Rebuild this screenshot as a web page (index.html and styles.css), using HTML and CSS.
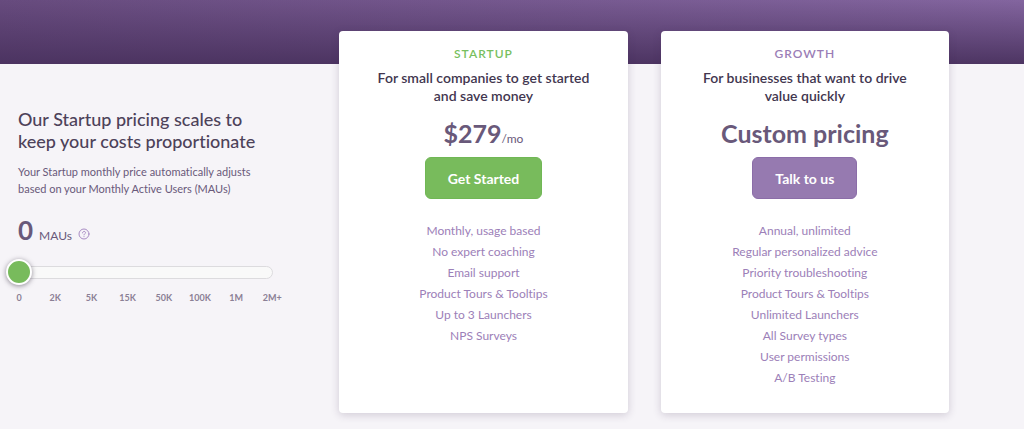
FILE: index.html
```
<!DOCTYPE html>
<html lang="en">
<head>
    <meta charset="utf-8">
    <title>Pricing</title>
    <link rel="stylesheet" href="styles.css">
</head>
<body>
    <header class="banner"></header>

    <main class="pricing">
        <section class="scale">
            <h1>Our Startup pricing scales to keep your costs proportionate</h1>
            <p class="intro">Your Startup monthly price automatically adjusts based on your Monthly Active Users (MAUs)</p>
            <div class="count">
                <output class="number" for="maus">0</output>
                <label for="maus">MAUs</label>
                <button class="help" type="button" aria-label="What are MAUs?">
                    <svg width="12" height="12" viewBox="0 0 12 12" fill="none" stroke="currentColor" stroke-linecap="round">
                        <circle cx="6" cy="6" r="5"/>
                        <path d="M4.5 4.9c0-2 3-2 3-.2 0 1.1-1.5 1-1.5 2.2"/>
                        <path d="M6 8.6v.1"/>
                    </svg>
                </button>
            </div>
            <input class="slider" id="maus" type="range" min="0" max="7" value="0">
            <div class="ticks">
                <span>0</span>
                <span>2K</span>
                <span>5K</span>
                <span>15K</span>
                <span>50K</span>
                <span>100K</span>
                <span>1M</span>
                <span>2M+</span>
            </div>
        </section>

        <section class="card startup">
            <h2>STARTUP</h2>
            <p class="pitch">For small companies to get started and save money</p>
            <p class="price">$279<small>/mo</small></p>
            <button class="cta" type="button">Get Started</button>
            <ul>
                <li>Monthly, usage based</li>
                <li>No expert coaching</li>
                <li>Email support</li>
                <li>Product Tours &amp; Tooltips</li>
                <li>Up to 3 Launchers</li>
                <li>NPS Surveys</li>
            </ul>
        </section>

        <section class="card growth">
            <h2>GROWTH</h2>
            <p class="pitch">For businesses that want to drive value quickly</p>
            <p class="price">Custom pricing</p>
            <button class="cta" type="button">Talk to us</button>
            <ul>
                <li>Annual, unlimited</li>
                <li>Regular personalized advice</li>
                <li>Priority troubleshooting</li>
                <li>Product Tours &amp; Tooltips</li>
                <li>Unlimited Launchers</li>
                <li>All Survey types</li>
                <li>User permissions</li>
                <li>A/B Testing</li>
            </ul>
        </section>
    </main>
</body>
</html>
```
FILE: styles.css
```
* {
    box-sizing: border-box;
}
body, h1, h2, p, ul {
    margin: 0;
    padding: 0;
}
body {
    background: #f6f4f8;
    color: #69597a;
    font-family: Lato, "Liberation Sans", sans-serif;
    font-size: 12px;
    font-variant-ligatures: none;
}
button {
    font-family: inherit;
    cursor: pointer;
}

.banner {
    height: 64px;
    background:
        linear-gradient(to bottom, rgba(74, 50, 95, 0) 0%, rgba(74, 50, 95, .95) 100%),
        linear-gradient(to right, #674b7e, #83659f);
}
.pricing {
    display: grid;
    grid-template-columns: repeat(3, 1fr);
    gap: 33px;
    margin-top: -33px;
    padding: 0 75px 16px 18px;
}

/* MAU slider */
.scale {
    padding-top: 77px;
}
.scale h1 {
    max-width: 260px;
    color: #4d425a;
    font-size: 18px;
    font-weight: 500;
    line-height: 22px;
}
.intro {
    max-width: 250px;
    margin-top: 11px;
    font-size: 11px;
    line-height: 17px;
}
.count {
    display: flex;
    align-items: baseline;
    gap: 6px;
    margin-top: 17px;
    line-height: 32px;
}
.number {
    font-size: 26px;
    font-weight: bold;
}
.help {
    padding: 0;
    border: 0;
    background: none;
    color: #a98cc4;
    line-height: 12px;
}
.help svg {
    display: block;
}
.slider {
    display: block;
    width: calc(100% - 21px);
    height: 26px;
    margin: 7px 0 0 -12px;
    background: none;
    -webkit-appearance: none;
    appearance: none;
}
.slider::-webkit-slider-runnable-track {
    height: 13px;
    border: 1px solid #dcdbde;
    border-radius: 7px;
    background: #f9f9f9;
}
.slider::-webkit-slider-thumb {
    width: 26px;
    height: 26px;
    margin: -8px 0 0 -1px;
    border: 2px solid #fff;
    border-radius: 50%;
    background: #78bb5c;
    box-shadow: 0 1px 5px rgba(40, 30, 50, .5);
    -webkit-appearance: none;
}
.ticks {
    display: flex;
    margin: 6px 16px 0 -17px;
    color: #8b8095;
    font-size: 9px;
    font-weight: bold;
    line-height: 14px;
    text-align: center;
}
.ticks span {
    flex: 1;
}

/* plans */
.card {
    padding: 14px 24px 25px;
    border-radius: 4px;
    background: #fff;
    box-shadow: 0 2px 8px rgba(60, 40, 80, .2);
    text-align: center;
}
.card h2 {
    font-size: 12px;
    font-weight: 600;
    letter-spacing: 1px;
    line-height: 18px;
}
.pitch {
    max-width: 230px;
    margin: 6px auto 0;
    color: #42364f;
    font-size: 14px;
    font-weight: 600;
    line-height: 18px;
}
.price {
    margin-top: 12px;
    font-size: 25px;
    font-weight: bold;
    line-height: 32px;
}
.price small {
    font-size: 12px;
    font-weight: normal;
    line-height: 12px;
}
.cta {
    height: 42px;
    margin-top: 8px;
    padding: 0 22px;
    border: 1px solid;
    border-radius: 6px;
    color: #fff;
    font-size: 14px;
    font-weight: bold;
}
.card ul {
    margin-top: 21px;
    color: #9c80b8;
    line-height: 21px;
    list-style: none;
}
.startup h2 {
    color: #78bf60;
}
.startup .cta {
    border-color: #70b755;
    background: #78bb5c;
}
.growth h2 {
    color: #9a7db6;
}
.growth .cta {
    border-color: #8b6da8;
    background: #967ab0;
}
```
